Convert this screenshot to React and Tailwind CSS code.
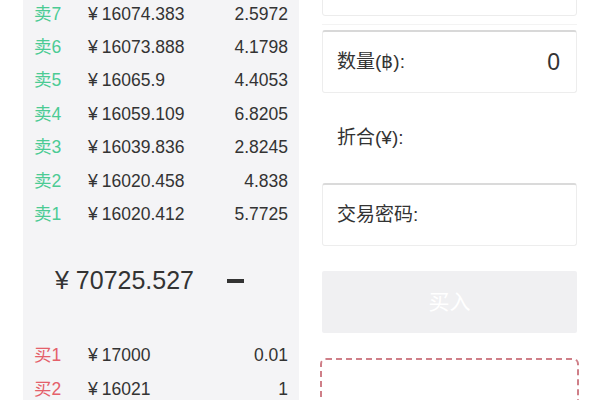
import React from 'react';

const asks = [
  ['卖7', '16074.383', '2.5972'],
  ['卖6', '16073.888', '4.1798'],
  ['卖5', '16065.9', '4.4053'],
  ['卖4', '16059.109', '6.8205'],
  ['卖3', '16039.836', '2.8245'],
  ['卖2', '16020.458', '4.838'],
  ['卖1', '16020.412', '5.7725'],
];

const bids = [
  ['买1', '17000', '0.01'],
  ['买2', '16021', '1'],
];

function Row({ label, price, amount, buy }) {
  return (
    <div className="flex items-center shrink-0 h-[33.4px] text-[17.5px] text-[#333]">
      <span className={`w-[65px] pl-[11px] ${buy ? 'text-[#e4606a]' : 'text-[#4ccb94]'}`}>{label}</span>
      <span className="flex-1"><span className="mr-[4px]">¥</span>{price}</span>
      <span className="pr-[11px]">{amount}</span>
    </div>
  );
}

export default function App() {
  const font = { fontFamily: '"Liberation Sans", "Noto Sans CJK SC", sans-serif' };
  return (
    <div className="w-[600px] h-[400px] overflow-hidden bg-white flex items-start" style={font}>
      <div className="ml-[23px] w-[276px] bg-[#f4f4f6] -mt-[3px] h-[410px] shrink-0">
        {asks.map(r => <Row key={r[0]} label={r[0]} price={r[1]} amount={r[2]} />)}
        <div className="h-[108px] flex items-center pb-[8px] pl-[32px] text-[#333]">
          <span className="text-[25px]">¥ 70725.527</span>
          <span className="ml-[33px] w-[17px] h-[4px] bg-[#333]"></span>
        </div>
        {bids.map(r => <Row key={r[0]} buy label={r[0]} price={r[1]} amount={r[2]} />)}
      </div>

      <div className="ml-[23px] w-[255px] flex flex-col text-[#333] text-[19px]">
        <div className="shrink-0 -mt-[40px] h-[56px] bg-white border border-[#ececec] rounded-[3px]"></div>
        <div className="shrink-0 mt-[8px] h-px bg-[#f3f3f3]"></div>
        <div className="shrink-0 mt-[5px] h-[63px] bg-white border border-[#ededed] border-t-2 border-t-[#d8d8d8] rounded-[3px] flex items-center justify-between pl-[14px] pr-[16px]">
          <span>数量(฿):</span>
          <span className="text-[23px]">0</span>
        </div>
        <div className="shrink-0 h-[90px] flex items-center pl-[15px]">
          <span>折合(¥):</span>
        </div>
        <div className="shrink-0 h-[63px] bg-white border border-[#ededed] border-t-2 border-t-[#dadada] rounded-[3px] flex items-center pl-[14px]">
          <span>交易密码:</span>
        </div>
        <div className="shrink-0 mt-[25px] h-[62px] bg-[#f0f0f2] rounded-[2px] flex items-center justify-center text-white text-[21px]">
          买入
        </div>
        <div className="shrink-0 mt-[25px] h-[60px] -mx-[2px] border-2 border-dashed border-[#cf7f88] rounded-[6px]"></div>
      </div>
    </div>
  );
}
